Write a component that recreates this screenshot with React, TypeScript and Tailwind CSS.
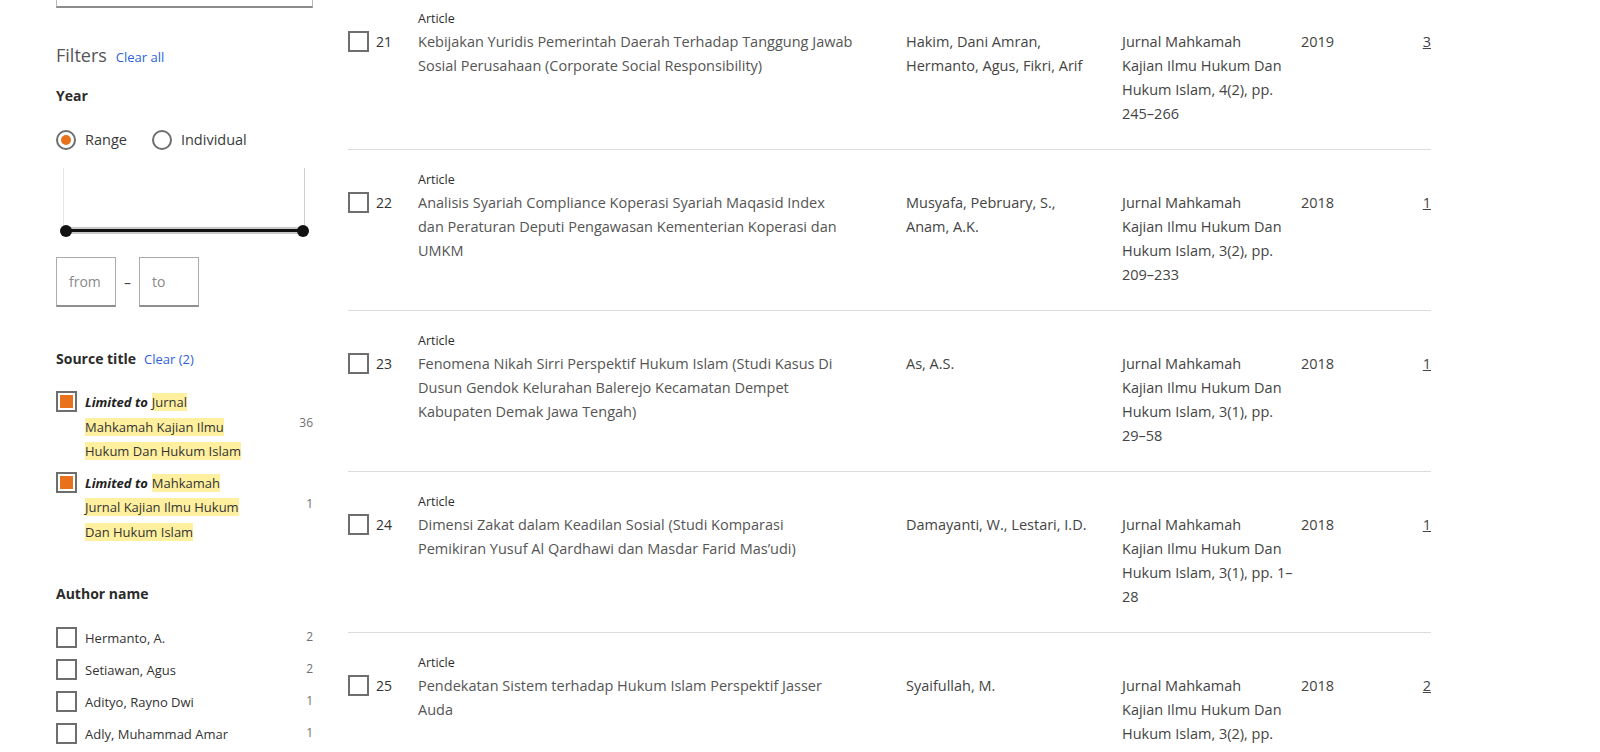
import React from "react";

const FONT = { fontFamily: '"Open Sans", "Noto Sans", Arial, sans-serif' };

type Row = {
  n: number;
  title: string[];
  authors: string[];
  source: string[];
  year: string;
  cites: string;
};

const rows: Row[] = [
  {
    n: 21,
    title: ["Kebijakan Yuridis Pemerintah Daerah Terhadap Tanggung Jawab", "Sosial Perusahaan (Corporate Social Responsibility)"],
    authors: ["Hakim, Dani Amran,", "Hermanto, Agus, Fikri, Arif"],
    source: ["Jurnal Mahkamah", "Kajian Ilmu Hukum Dan", "Hukum Islam, 4(2), pp.", "245–266"],
    year: "2019",
    cites: "3",
  },
  {
    n: 22,
    title: ["Analisis Syariah Compliance Koperasi Syariah Maqasid Index", "dan Peraturan Deputi Pengawasan Kementerian Koperasi dan", "UMKM"],
    authors: ["Musyafa, Pebruary, S.,", "Anam, A.K."],
    source: ["Jurnal Mahkamah", "Kajian Ilmu Hukum Dan", "Hukum Islam, 3(2), pp.", "209–233"],
    year: "2018",
    cites: "1",
  },
  {
    n: 23,
    title: ["Fenomena Nikah Sirri Perspektif Hukum Islam (Studi Kasus Di", "Dusun Gendok Kelurahan Balerejo Kecamatan Dempet", "Kabupaten Demak Jawa Tengah)"],
    authors: ["As, A.S."],
    source: ["Jurnal Mahkamah", "Kajian Ilmu Hukum Dan", "Hukum Islam, 3(1), pp.", "29–58"],
    year: "2018",
    cites: "1",
  },
  {
    n: 24,
    title: ["Dimensi Zakat dalam Keadilan Sosial (Studi Komparasi", "Pemikiran Yusuf Al Qardhawi dan Masdar Farid Mas’udi)"],
    authors: ["Damayanti, W., Lestari, I.D."],
    source: ["Jurnal Mahkamah", "Kajian Ilmu Hukum Dan", "Hukum Islam, 3(1), pp. 1–", "28"],
    year: "2018",
    cites: "1",
  },
  {
    n: 25,
    title: ["Pendekatan Sistem terhadap Hukum Islam Perspektif Jasser", "Auda"],
    authors: ["Syaifullah, M."],
    source: ["Jurnal Mahkamah", "Kajian Ilmu Hukum Dan", "Hukum Islam, 3(2), pp.", "141–160"],
    year: "2018",
    cites: "2",
  },
];

function Lines({ lines }: { lines: string[] }) {
  return (
    <>
      {lines.map((l, i) => (
        <div key={i} className="whitespace-nowrap">
          {l}
        </div>
      ))}
    </>
  );
}

function Box({ checked = false }: { checked?: boolean }) {
  return (
    <div className="w-[21px] h-[21px] border-2 border-[#6e6e6e] bg-white flex items-center justify-center shrink-0">
      {checked && <div className="w-[13px] h-[13px] bg-[#e9711c]" />}
    </div>
  );
}

function Radio({ checked = false }: { checked?: boolean }) {
  return (
    <div className="w-[20px] h-[20px] rounded-full border-2 border-[#6e6e6e] flex items-center justify-center shrink-0">
      {checked && <div className="w-[10px] h-[10px] rounded-full bg-[#e9711c]" />}
    </div>
  );
}

function SourceItem({ lines, count }: { lines: string[]; count: string }) {
  return (
    <div className="flex items-start">
      <Box checked />
      <div className="ml-[8px] text-[13px] leading-[24.5px] -mt-[1px]">
        <div className="whitespace-nowrap">
          <span className="italic font-bold text-[#222] mr-[4px]">Limited to</span>
          <span className="bg-[#fff09f] text-[#333]">{lines[0]}</span>
        </div>
        {lines.slice(1).map((l) => (
          <div key={l} className="whitespace-nowrap">
            <span className="bg-[#fff09f] text-[#333]">{l}</span>
          </div>
        ))}
      </div>
      <span className="ml-auto mt-[23px] text-[12px] text-[#707070]">{count}</span>
    </div>
  );
}

function Sidebar() {
  return (
    <aside className="w-[257px] ml-[56px] shrink-0 text-[#323232]">
      <div className="h-[44px] -mt-[24px] border border-[#b9b9b9] border-b-2 border-b-[#8c8c8c]" />
      <div className="flex items-baseline gap-[9px] mt-[35px] h-[24px]">
        <span className="text-[18px] leading-[24px] text-[#555]">Filters</span>
        <span className="text-[13px] text-[#2e5fdb]">Clear all</span>
      </div>
      <div className="mt-[19px] text-[14px] leading-[20px] font-bold text-[#2b2b2b]">Year</div>
      <div className="mt-[24px] flex items-center h-[20px]">
        <Radio checked />
        <span className="ml-[9px] text-[14.5px] text-[#3a3a3a]">Range</span>
        <div className="ml-[25px]"><Radio /></div>
        <span className="ml-[9px] text-[14.5px] text-[#3a3a3a]">Individual</span>
      </div>
      <div className="relative mt-[18px] h-[72px]">
        <div className="absolute left-[7px] top-0 h-[60px] w-px bg-[#e6e6e6]" />
        <div className="absolute left-[248px] top-0 h-[60px] w-px bg-[#cfcfcf]" />
        <div className="absolute left-[8px] top-[59px] w-[241px] h-[7px] bg-[#c9c9c9]" />
        <div className="absolute left-[10px] top-[61px] w-[237px] h-[3px] bg-[#111]" />
        <div className="absolute left-[4px] top-[57px] w-[12px] h-[12px] rounded-full bg-[#111]" />
        <div className="absolute left-[241px] top-[57px] w-[12px] h-[12px] rounded-full bg-[#111]" />
      </div>
      <div className="mt-[17px] flex items-center">
        <div className="w-[60px] h-[50px] border border-[#ababab] border-b-2 border-b-[#8f8f8f] flex items-center pl-[12px] text-[14px] text-[#8a8a8a]">from</div>
        <span className="mx-[8px] text-[14px] text-[#444]">–</span>
        <div className="w-[60px] h-[50px] border border-[#ababab] border-b-2 border-b-[#8f8f8f] flex items-center pl-[12px] text-[14px] text-[#8a8a8a]">to</div>
      </div>
      <div className="mt-[41px] flex items-baseline gap-[8px] h-[20px]">
        <span className="text-[14px] font-bold text-[#2b2b2b]">Source title</span>
        <span className="text-[13px] text-[#2e5fdb]">Clear (2)</span>
      </div>
      <div className="mt-[23px] flex flex-col gap-[8px]">
        <SourceItem lines={["Jurnal", "Mahkamah Kajian Ilmu", "Hukum Dan Hukum Islam"]} count="36" />
        <SourceItem lines={["Mahkamah", "Jurnal Kajian Ilmu Hukum", "Dan Hukum Islam"]} count="1" />
      </div>
      <div className="mt-[40px] text-[14px] leading-[20px] font-bold text-[#2b2b2b]">Author name</div>
      <div className="mt-[22px] flex flex-col gap-[10px]">
        {[
          ["Hermanto, A.", "2"],
          ["Setiawan, Agus", "2"],
          ["Adityo, Rayno Dwi", "1"],
          ["Adly, Muhammad Amar", "1"],
        ].map(([name, c]) => (
          <div key={name} className="flex items-center h-[22px]">
            <Box />
            <span className="ml-[8px] text-[13px] text-[#333] mt-[3px]">{name}</span>
            <span className="ml-auto text-[12px] text-[#707070]">{c}</span>
          </div>
        ))}
      </div>
    </aside>
  );
}

function ResultRow({ r }: { r: Row }) {
  return (
    <div className="flex border-b border-[#dcdcdc] pt-[19px] pb-[23px]">
      <div className="w-[20px] pt-[23px] shrink-0">
        <Box />
      </div>
      <div className="w-[50px] pl-[8px] pt-[22px] text-[14px] leading-[24px] text-[#323232] shrink-0">{r.n}</div>
      <div className="w-[488px] shrink-0">
        <div className="text-[12.5px] leading-[22px] text-[#2e2e2e]">Article</div>
        <div className="text-[14.5px] leading-[24px] text-[#555]">
          <Lines lines={r.title} />
        </div>
      </div>
      <div className="w-[216px] pt-[22px] text-[14.5px] leading-[24px] text-[#444] shrink-0">
        <Lines lines={r.authors} />
      </div>
      <div className="w-[179px] pt-[22px] text-[14.5px] leading-[24px] text-[#444] shrink-0">
        <Lines lines={r.source} />
      </div>
      <div className="pt-[22px] text-[14.5px] leading-[24px] text-[#444]">{r.year}</div>
      <div className="ml-auto pt-[22px] text-[14.5px] leading-[24px] text-[#444] underline">{r.cites}</div>
    </div>
  );
}

export default function App() {
  return (
    <div className="w-[1600px] h-[752px] overflow-hidden bg-white" style={FONT}>
      <div className="flex items-start -mt-[12px]">
        <Sidebar />
        <main className="ml-[35px] mt-[1px] w-[1083px] shrink-0">
          {rows.map((r) => (
            <ResultRow key={r.n} r={r} />
          ))}
        </main>
      </div>
    </div>
  );
}
